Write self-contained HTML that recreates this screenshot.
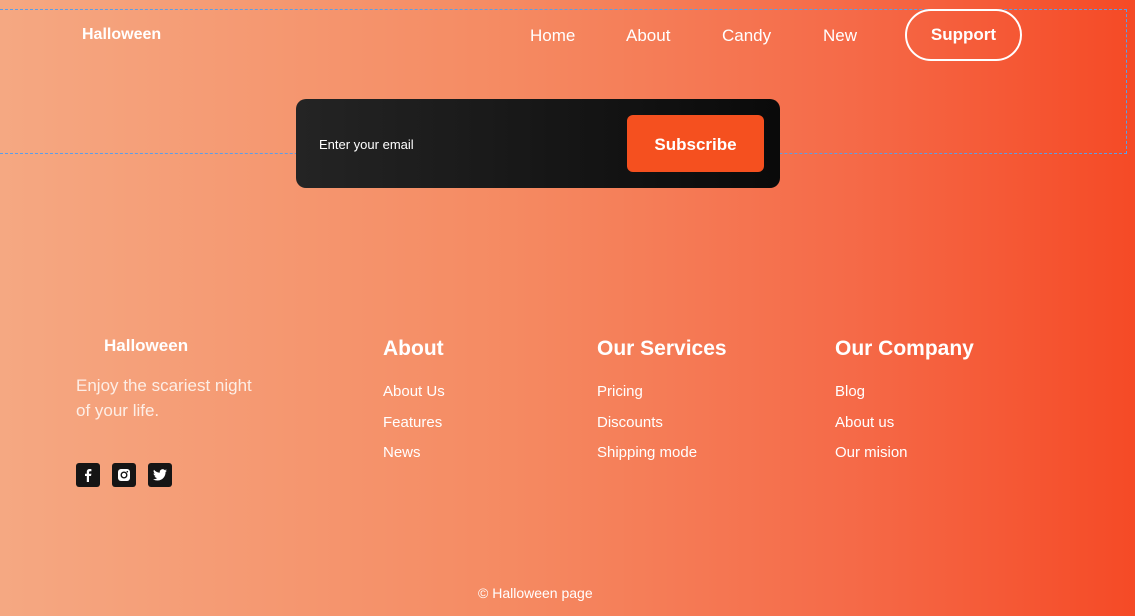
<!DOCTYPE html>
<html><head><style>
*{margin:0;padding:0;box-sizing:border-box}
body{width:1135px;height:616px;overflow:hidden;font-family:"Liberation Sans",sans-serif;color:#fff;background:linear-gradient(90deg,#f5a882 0%,#f58a62 45%,#f56a48 75%,#f54a26 100%);position:relative}
.a{position:absolute;white-space:nowrap}
.dash{position:absolute;left:0;top:9px;width:1127px;height:145px;border:1px dashed #5b9ee8;border-left:none}
.nav{font-size:17px}
.sup{position:absolute;left:905px;top:9px;width:117px;height:52px;border:2px solid #fff;border-radius:26px;font-size:17px;font-weight:bold;display:flex;align-items:center;justify-content:center}
.box{position:absolute;left:296px;top:99px;width:484px;height:89px;border-radius:10px;background:linear-gradient(90deg,#242424,#0a0a0a)}
.btn{position:absolute;left:627px;top:115px;width:137px;height:57px;border-radius:6px;background:#f5501f;font-size:17px;font-weight:bold;display:flex;align-items:center;justify-content:center;padding-top:2px}
h3{font-size:21px;font-weight:bold;position:absolute;white-space:nowrap}
.l{font-size:15px;position:absolute;white-space:nowrap}
.ic{position:absolute;top:463px;width:24px;height:24px;border-radius:3px;background:#151515;display:flex;align-items:center;justify-content:center}
</style></head><body>
<div class="dash"></div>
<div class="a" style="left:82px;top:26px;font-size:16px;font-weight:bold">Halloween</div>
<div class="a nav" style="left:530px;top:26px">Home</div>
<div class="a nav" style="left:626px;top:26px">About</div>
<div class="a nav" style="left:722px;top:26px">Candy</div>
<div class="a nav" style="left:823px;top:26px">New</div>
<div class="sup">Support</div>
<div class="box"></div>
<div class="a" style="left:319px;top:137px;font-size:13px">Enter your email</div>
<div class="btn">Subscribe</div>
<div class="a" style="left:104px;top:336px;font-size:17px;font-weight:bold">Halloween</div>
<div class="a" style="left:76px;top:373px;font-size:17px;line-height:25px;color:#fdeee6">Enjoy the scariest night<br>of your life.</div>
<div class="ic" style="left:76px"><svg width="12" height="14" viewBox="0 0 12 14"><path d="M7 14V8h2l.4-2.3H7V4.3c0-.7.3-1.1 1.1-1.1h1.3V1.1C9 1 8.4 1 7.7 1 6 1 4.8 2 4.8 3.9v1.8H3V8h1.8v6z" fill="#fff"/></svg></div>
<div class="ic" style="left:112px"><svg width="14" height="14" viewBox="0 0 14 14"><rect x="1" y="1" width="12" height="12" rx="3" fill="#fff"/><circle cx="7" cy="7" r="2.8" fill="none" stroke="#151515" stroke-width="1.4"/><circle cx="10.3" cy="3.7" r=".8" fill="#151515"/></svg></div>
<div class="ic" style="left:148px"><svg width="14" height="12" viewBox="0 0 24 20"><path d="M24 2.4a9.8 9.8 0 0 1-2.8.8A4.9 4.9 0 0 0 23.3.4a9.9 9.9 0 0 1-3.1 1.2A4.9 4.9 0 0 0 11.8 6 14 14 0 0 1 1.7.9a4.9 4.9 0 0 0 1.5 6.6 4.9 4.9 0 0 1-2.2-.6 4.9 4.9 0 0 0 3.9 4.8 4.9 4.9 0 0 1-2.2.1 4.9 4.9 0 0 0 4.6 3.4A9.9 9.9 0 0 1 0 17.3 14 14 0 0 0 7.5 19.5c9.1 0 14-7.5 14-14v-.6A10 10 0 0 0 24 2.4z" fill="#fff"/></svg></div>
<h3 style="left:383px;top:337px">About</h3>
<div class="l" style="left:383px;top:383px">About Us</div>
<div class="l" style="left:383px;top:414px">Features</div>
<div class="l" style="left:383px;top:444px">News</div>
<h3 style="left:597px;top:337px">Our Services</h3>
<div class="l" style="left:597px;top:383px">Pricing</div>
<div class="l" style="left:597px;top:414px">Discounts</div>
<div class="l" style="left:597px;top:444px">Shipping mode</div>
<h3 style="left:835px;top:337px">Our Company</h3>
<div class="l" style="left:835px;top:383px">Blog</div>
<div class="l" style="left:835px;top:414px">About us</div>
<div class="l" style="left:835px;top:444px">Our mision</div>
<div class="a" style="left:478px;top:585px;font-size:14px">© Halloween page</div>
</body></html>
